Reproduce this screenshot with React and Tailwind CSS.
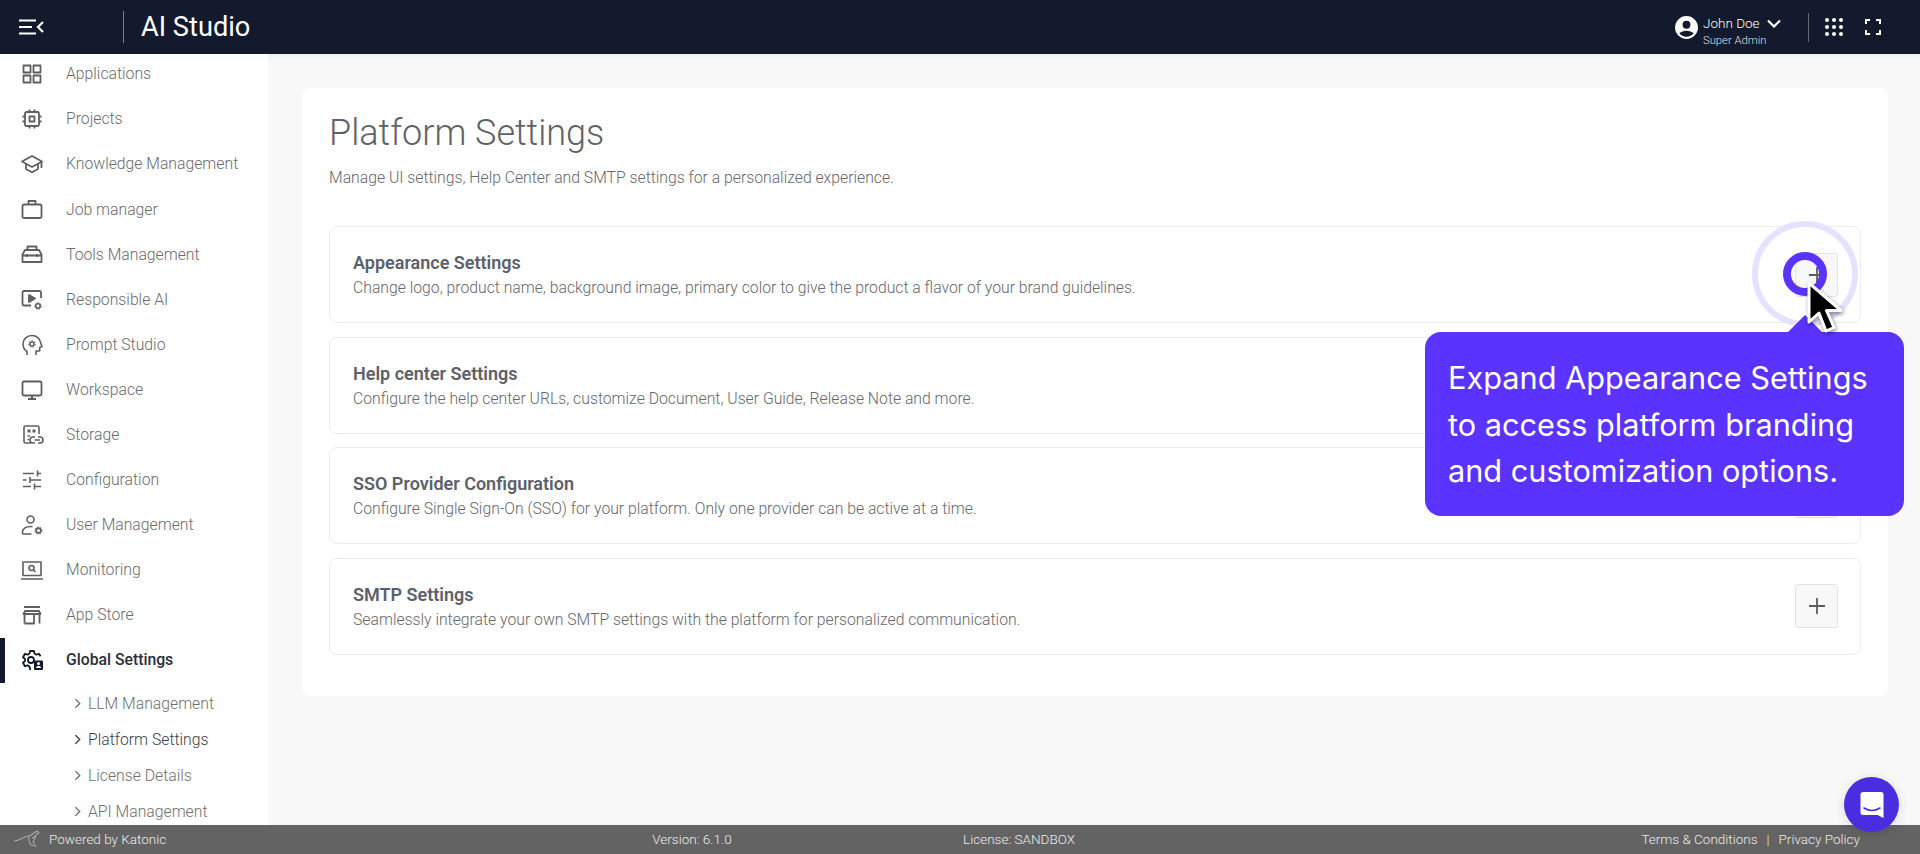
import React from "react";

const S = ({ children, className = "w-6 h-6", sw = 1.6, vb = "0 0 24 24" }) => (
  <svg viewBox={vb} className={className} fill="none" stroke="currentColor" strokeWidth={sw} strokeLinecap="butt" strokeLinejoin="round">
    {children}
  </svg>
);

const Gear = ({ x, y, r = 3 }) => (
  <g>
    <circle cx={x} cy={y} r={r} strokeWidth="1.6" />
    <circle cx={x} cy={y} r={r + 1.1} strokeWidth="1" strokeDasharray="1.4 1.5" />
  </g>
);

const icons = {
  apps: (
    <S sw={1.8}>
      <rect x="3.5" y="3.5" width="7" height="7" />
      <rect x="13.5" y="3.5" width="7" height="7" />
      <rect x="3.5" y="13.5" width="7" height="7" />
      <rect x="13.5" y="13.5" width="7" height="7" />
    </S>
  ),
  chip: (
    <S sw={1.8}>
      <rect x="5" y="5" width="14" height="14" rx="1.5" />
      <rect x="9.5" y="9.5" width="5" height="5" />
      <path d="M2.5 9.5H5M2.5 14.5H5M19 9.5h2.5M19 14.5h2.5M9.5 2.5V5M14.5 2.5V5M9.5 19v2.5M14.5 19v2.5" />
    </S>
  ),
  school: (
    <S sw={1.8}>
      <path d="M12 4 2 9.5 12 15l10-5.5L12 4Z" />
      <path d="M6 12v5l6 3.2 6-3.2v-5M21.5 10v6" />
    </S>
  ),
  work: (
    <S sw={1.8}>
      <rect x="2.5" y="7.5" width="19" height="13.5" rx="1.5" />
      <path d="M8.5 7.5V4h7v3.5" />
    </S>
  ),
  tools: (
    <S sw={1.8}>
      <path d="M2.5 12.5 5 8h14l2.5 4.5V20H2.5v-7.5Z" />
      <path d="M7.5 8V4.5h9V8M2.5 13.5h19M7 12v3M17 12v3" />
    </S>
  ),
  rai: (
    <S sw={1.8}>
      <path d="M11 17.5H4a1.5 1.5 0 0 1-1.5-1.5V4.500A1.500 1.500 0 0 1 4 3h15.500A1.500 1.500 0 0 1 21 4.500V10" />
      <path d="M9 7v7l6-3.500L9 7Z" fill="currentColor" />
      <Gear x={18} y={18} r={2.2} />
    </S>
  ),
  prompt: (
    <S>
      <path d="M7 22v-3.500C4.500 16.800 3 14 3 11c0-5 4-8.500 9-8.500 4.800 0 8 3.200 8.500 7l1.500 4-2.300 1v3.500h-3.700V22" />
      <circle cx="12" cy="11" r="2" />
      <circle cx="12" cy="11" r="3.400" strokeWidth="1" strokeDasharray="1.500 1.500" />
    </S>
  ),
  monitor: (
    <S sw={1.8}>
      <rect x="2.500" y="3.500" width="19" height="14" rx="1.500" />
      <path d="M8 21h8M12 17.500V21" strokeWidth="2" />
    </S>
  ),
  storage: (
    <S>
      <path d="M11 20H5.500A1.500 1.500 0 0 1 4 18.500V4.500A1.500 1.500 0 0 1 5.500 3h12A1.500 1.500 0 0 1 19 4.500V11" />
      <rect x="7.500" y="6.500" width="3" height="3" fill="currentColor" stroke="none" />
      <rect x="12.500" y="6.500" width="3" height="3" fill="currentColor" stroke="none" />
      <path d="M7.500 13h2.500M7.500 16.500h1.500" />
      <path d="M15 14h-2a3 3 0 0 0 0 6h2M18 14h2a3 3 0 0 1 0 6h-2M14.500 17h5.500" />
    </S>
  ),
  sliders: (
    <S>
      <path d="M3 5.500h11M17.500 5.500H21M17.500 2.500v6M3 12h3.500M10 12h11M10 9v6M3 18.500h8M14.500 18.500H21M14.500 15.500v6" />
    </S>
  ),
  user: (
    <S>
      <circle cx="10.500" cy="6.500" r="3.500" />
      <path d="M2.500 21v-2c0-3 3-5.500 8-5.500 1 0 1.500.100 2 .200M2.500 21h9" />
      <Gear x={18.500} y={17.500} r={2.400} />
    </S>
  ),
  monitoring: (
    <S>
      <rect x="3" y="4" width="18" height="13.500" />
      <circle cx="11.500" cy="10" r="2.500" />
      <path d="m13.500 12 2 2M1 21h22" />
    </S>
  ),
  store: (
    <S>
      <path d="M4 4h16M3.500 11 5 8h14l1.500 3H3.500ZM4.500 11v9.500M19.500 11v9.500M4.500 20.500H14V11" strokeWidth="1.800" />
    </S>
  ),
  global: (
    <S sw={1.800}>
      <path d="M11 21h-1l-.500-2.500-2-1.200L5 18.200l-2-3.500 2-1.700v-2L3 9.300l2-3.500 2.500.900 2-1.200L10 3h4l.500 2.500 2 1.200 2.500-.900 1.500 2.500" />
      <circle cx="11" cy="12" r="3" />
      <rect x="14" y="12.500" width="9" height="9.500" rx="1" fill="currentColor" stroke="none" />
      <circle cx="18.500" cy="15.500" r="1.500" fill="#fff" stroke="none" />
      <path d="M16 20c0-1.500 1-2 2.500-2s2.500.500 2.500 2" fill="#fff" stroke="none" />
    </S>
  ),
};

const nav = [
  ["apps", "Applications"],
  ["chip", "Projects"],
  ["school", "Knowledge Management"],
  ["work", "Job manager"],
  ["tools", "Tools Management"],
  ["rai", "Responsible AI"],
  ["prompt", "Prompt Studio"],
  ["monitor", "Workspace"],
  ["storage", "Storage"],
  ["sliders", "Configuration"],
  ["user", "User Management"],
  ["monitoring", "Monitoring"],
  ["store", "App Store"],
];

const subs = [
  ["LLM Management", false],
  ["Platform Settings", true],
  ["License Details", false],
  ["API Management", false],
];

const sections = [
  ["Appearance Settings", "Change logo, product name, background image, primary color to give the product a flavor of your brand guidelines."],
  ["Help center Settings", "Configure the help center URLs, customize Document, User Guide, Release Note and more."],
  ["SSO Provider Configuration", "Configure Single Sign-On (SSO) for your platform. Only one provider can be active at a time."],
  ["SMTP Settings", "Seamlessly integrate your own SMTP settings with the platform for personalized communication."],
];

function Header() {
  return (
    <header className="h-[54px] shrink-0 bg-[#131a2e] flex items-center text-white relative z-10">
      <div className="w-[123px] pl-[19px] shrink-0">
        <svg viewBox="0 0 25 16" className="w-[25px] h-[16px]" fill="none" stroke="#fff" strokeWidth="2.200">
          <path d="M0 1.500h17M0 8h13M0 14.500h17M24 3l-5 5 5 5" />
        </svg>
      </div>
      <div className="w-px h-[32px] bg-[#7d808c]" />
      <div className="ml-[17px] pt-[1px] text-[27.200px] leading-none font-normal">AI Studio</div>
      <div className="ml-auto flex items-center">
        <svg viewBox="0 0 24 24" className="w-[25px] h-[25px]" fill="#fff">
          <path d="M12 1a11 11 0 1 0 0 22 11 11 0 0 0 0-22Zm0 4.500a3.800 3.800 0 1 1 0 7.600 3.800 3.800 0 0 1 0-7.600Zm0 15.300c-2.800 0-5.300-1.300-6.900-3.400 1.600-1.500 4.200-2.400 6.900-2.400s5.300.900 6.900 2.400c-1.600 2.100-4.100 3.400-6.900 3.400Z" />
        </svg>
        <div className="ml-[4px] w-[105px] pt-[9px]">
          <div className="flex items-center text-[13.500px] leading-[16px] font-light">
            John Doe
            <svg viewBox="0 0 14 9" className="w-[14px] h-[9px] ml-[7px]" fill="none" stroke="#fff" strokeWidth="2.200">
              <path d="m1 1.500 6 6 6-6" />
            </svg>
          </div>
          <div className="text-[11.250px] leading-[14px] mt-[3px] font-light text-[#dfe0e4]">Super Admin</div>
        </div>
        <div className="w-px h-[29px] bg-[#676b78]" />
        <div className="ml-[16px] grid grid-cols-3 gap-[3px] w-[18px]">
          {Array.from({ length: 9 }).map((_, i) => (
            <span key={i} className="w-[4px] h-[4px] rounded-full bg-white" />
          ))}
        </div>
        <svg viewBox="0 0 16 16" className="ml-[22px] mr-[39px] w-[16px] h-[16px]" fill="none" stroke="#fff" strokeWidth="2">
          <path d="M1 5V1h4M11 1h4v4M1 11v4h4M15 11v4h-4" />
        </svg>
      </div>
    </header>
  );
}

function Sidebar() {
  return (
    <aside className="w-[268px] shrink-0 bg-white overflow-hidden">
      <div className="-mt-[2.500px]">
        {nav.map(([k, label]) => (
          <div key={label} className="h-[45.100px] flex items-center pl-[20px] text-[#5f5f62]">
            <span className="w-[24px] h-[24px] shrink-0">{icons[k]}</span>
            <span className="ml-[22px] text-[15.750px] font-light text-[#6b6b6e]">{label}</span>
          </div>
        ))}
        <div className="h-[45.100px] flex items-center border-l-[5px] border-[#131a2e] pl-[15px] text-[#131a2e]">
          <span className="w-[24px] h-[24px] shrink-0">{icons.global}</span>
          <span className="ml-[22px] text-[15.750px] font-medium text-[#2a2e3d]">Global Settings</span>
        </div>
      </div>
      <div className="pt-[3px]">
        {subs.map(([label, active]) => (
          <div key={label} className={`h-[36px] flex items-center pl-[74px] ${active ? "text-[#3a3d49]" : "text-[#6f6f72]"}`}>
            <svg viewBox="0 0 8 12" className="w-[7px] h-[11px] shrink-0" fill="none" stroke="currentColor" strokeWidth="1.600">
              <path d="m1.500 1 5 5-5 5" />
            </svg>
            <span className="ml-[7px] text-[15.750px] font-light">{label}</span>
          </div>
        ))}
      </div>
    </aside>
  );
}

function Plus() {
  return (
    <div className="w-[43px] h-[44px] shrink-0 rounded-[3px] bg-[#f8f8f8] border border-[#e3e3e3] flex items-center justify-center">
      <svg viewBox="0 0 18 18" className="w-[18px] h-[18px]" fill="none" stroke="#5c5c5c" strokeWidth="1.800">
        <path d="M9 1v16M1 9h16" />
      </svg>
    </div>
  );
}

function Main() {
  return (
    <main className="flex-1 bg-[#f8f8f8] pl-[34px] pr-[32px] pt-[34px] shadow-[inset_0_6px_6px_-6px_rgba(0,0,0,0.08)]">
      <div className="h-[608px] bg-white rounded-[8px] pl-[27px] pr-[27px] pt-[24px]">
        <h1 className="text-[36px] leading-[42px] font-light text-[#5f6267]">Platform Settings</h1>
        <p className="mt-[14px] text-[15.750px] leading-[20px] font-light text-[#66686d]">
          Manage UI settings, Help Center and SMTP settings for a personalized experience.
        </p>
        <div className="mt-[38px] flex flex-col gap-[13.500px]">
          {sections.map(([t, d]) => (
            <div key={t} className="h-[97px] rounded-[8px] border border-[#ececec] flex items-center pl-[23px] pr-[22px]">
              <div className="flex-1 pt-[1px]">
                <div className="text-[18px] leading-[22px] font-semibold text-[#5b616b]">{t}</div>
                <div className="mt-[4px] text-[15.750px] leading-[20px] font-light text-[#66686d]">{d}</div>
              </div>
              <Plus />
            </div>
          ))}
        </div>
      </div>
    </main>
  );
}

function Footer() {
  return (
    <footer className="h-[29px] shrink-0 bg-[#636363] flex items-center text-[13.500px] font-light text-[#ececec] relative">
      <div className="w-[563px] pl-[14px] flex items-center">
        <svg viewBox="0 0 28 20" className="w-[28px] h-[20px]" fill="none" stroke="#a9a9a9" strokeWidth="1.100" strokeLinejoin="round">
          <path d="M0 11c6 0 10-5 15-5 2 0 3-2 5-3l3-2 2 2-3 2c-1 3-2 5-3 7l3 5" />
          <path d="M15 6c-1 3 0 6 2 9l3 1M22 6l-4 2" />
        </svg>
        <span className="ml-[7px]">Powered by Katonic</span>
      </div>
      <div className="w-[258px] text-center">Version: 6.1.0</div>
      <div className="ml-[109px] w-[178px] text-center">License: SANDBOX</div>
      <div className="ml-auto mr-[60px] flex items-center">
        <span>Terms &amp; Conditions</span>
        <span className="mx-[9px]">|</span>
        <span>Privacy Policy</span>
      </div>
    </footer>
  );
}

function Overlay() {
  return (
    <>
      <div className="absolute left-[1752px] top-[221px] w-[106px] h-[106px] rounded-full border-[6px] border-[#e6e1ff]" />
      <div className="absolute left-[1783px] top-[252px] w-[44px] h-[44px] rounded-full border-[8px] border-[#5b33ff]" />
      <div className="absolute left-[1425px] top-[332px] w-[479px] h-[184px] rounded-[16px] bg-[#5b33ff] pl-[23px] pt-[23px] text-white text-[30.700px] leading-[46.500px]" style={{ fontFamily: "Inter, sans-serif" }}>
        <div className="absolute left-[363px] top-[-17px] w-0 h-0 border-l-[17px] border-r-[17px] border-b-[17px] border-l-transparent border-r-transparent border-b-[#5b33ff]" />
        Expand Appearance Settings
        <br />
        to access platform branding
        <br />
        and customization options.
      </div>
      <svg viewBox="0 0 40 56" className="absolute left-[1807px] top-[281px] w-[40px] h-[56px]" style={{ filter: "drop-shadow(1px 2px 2px rgba(0,0,0,0.45))" }}>
        <path d="M2 2v39l10-9 7 18 8-3.500-7.500-17H34L2 2Z" fill="#000" stroke="#fff" strokeWidth="3" strokeLinejoin="round" />
      </svg>
      <div className="absolute left-[1844px] top-[777px] w-[55px] h-[55px] rounded-full bg-[#4a2ddf] flex items-center justify-center shadow-[0_2px_12px_rgba(0,0,0,0.12)]">
        <svg viewBox="0 0 24 28" className="w-[24px] h-[28px]">
          <path d="M3 1h18a2.500 2.500 0 0 1 2.500 2.500V27l-6-3H3a2.500 2.500 0 0 1-2.500-2.500v-18A2.500 2.500 0 0 1 3 1Z" fill="#fff" />
          <path d="M4 17c5 3 11 3 16 0" fill="none" stroke="#4a2ddf" strokeWidth="1.500" strokeLinecap="round" />
        </svg>
      </div>
    </>
  );
}

export default function App() {
  return (
    <div className="relative w-[1920px] h-[854px] overflow-hidden flex flex-col" style={{ fontFamily: "Roboto, sans-serif" }}>
      <Header />
      <div className="flex-1 flex min-h-0">
        <Sidebar />
        <Main />
      </div>
      <Footer />
      <Overlay />
    </div>
  );
}
